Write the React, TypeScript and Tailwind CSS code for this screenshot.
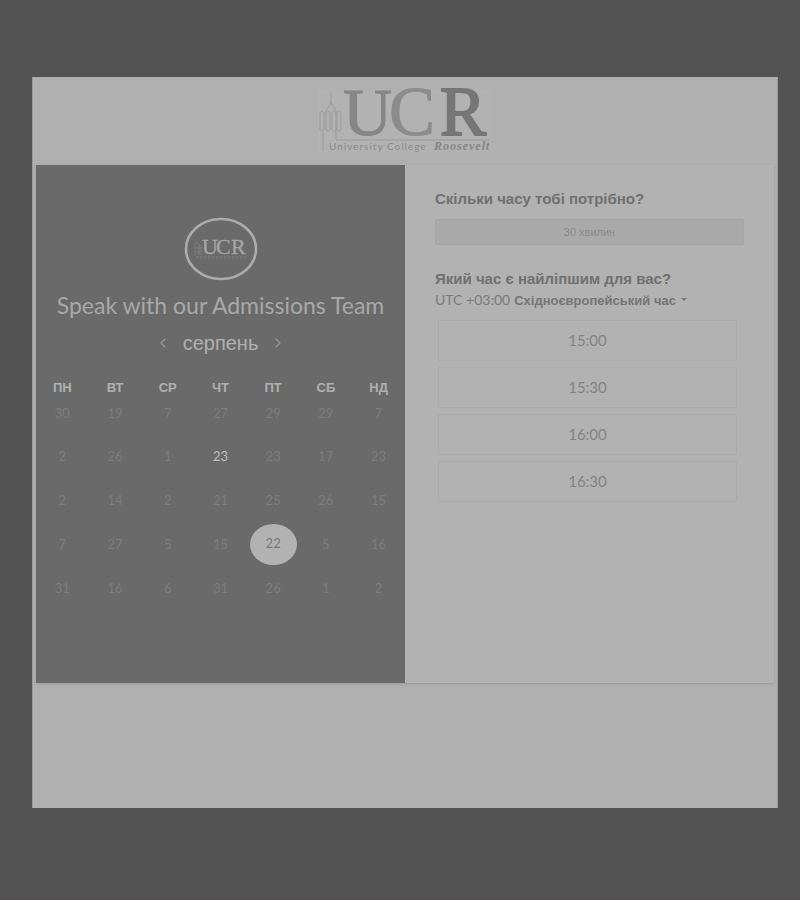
import { useState } from "react";
import { ChevronLeft, ChevronRight } from "lucide-react";

const weekdays = ["ПН", "ВТ", "СР", "ЧТ", "ПТ", "СБ", "НД"];

const weeks = [
  [30, 19, 7, 27, 29, 29, 7],
  [2, 26, 1, 23, 23, 17, 23],
  [2, 14, 2, 21, 25, 26, 15],
  [7, 27, 5, 15, 22, 5, 16],
  [31, 16, 6, 31, 26, 1, 2],
];

const slots = ["15:00", "15:30", "16:00", "16:30"];

const latin = "font-['Lato','Liberation_Sans',sans-serif]";
const sans = "font-['Liberation_Sans',sans-serif]";

function Logo() {
  return (
    <svg className="overflow-visible" width="174" height="68" viewBox="0 0 174 68" role="img" aria-label="University College Roosevelt">
      <rect x="0" y="2" width="174" height="63" fill="#b2b2b2" />
      <g fill="none" stroke="#9b9b9b" strokeWidth="1">
        <path d="M13 5v8M13 13l-1 4-4 5v5M13 13l1 4 4 5v5M18 38v14h154M5 45v18" />
        <path d="M2 25q2-4 4 0v17q-2 3-4 0zM8 25q2-4 4 0v17q-2 3-4 0zM14 25q2-4 4 0v17q-2 3-4 0zM19 25q2-4 4 0v17q-2 3-4 0z" />
      </g>
      <g fontFamily="Liberation Serif, serif">
        <text x="25" y="47" fontSize="68" fill="#868686" stroke="#868686">U</text>
        <text x="71" y="47" fontSize="69" fill="#8c8c8c" stroke="#8c8c8c">C</text>
        <text x="122" y="47" fontSize="69" fill="#767676" stroke="#767676" strokeWidth="2">R</text>
      </g>
      <text x="11" y="62" fill="#8b8b8b" fontFamily="Lato, sans-serif" fontSize="10" letterSpacing="1">
        University College
      </text>
      <text x="116" y="62" fill="#858585" fontFamily="Liberation Serif, serif" fontSize="12" fontWeight="bold" fontStyle="italic" letterSpacing="1">
        Roosevelt
      </text>
    </svg>
  );
}

function Avatar() {
  return (
    <svg width="74" height="64" viewBox="0 0 74 64" role="img" aria-label="UCR">
      <ellipse cx="37" cy="32" rx="35" ry="30" fill="none" stroke="#acacac" strokeWidth="2.5" />
      <path d="M11 38V28l2-3 2 3v10M15 38V28l1-1 1 1v10M11 31h6M11 35h6" fill="none" stroke="#7c7c7c" />
      <g fontFamily="Liberation Serif, serif" fontSize="22" fill="#a6a6a6" stroke="#a6a6a6" strokeWidth="0.3">
        <text x="18" y="37">U</text>
        <text x="32" y="37">C</text>
        <text x="47" y="37">R</text>
      </g>
      <path d="M12 40h51" stroke="#7c7c7c" strokeDasharray="3 1" />
    </svg>
  );
}

function Calendar({ selected, onSelect }: { selected: string; onSelect: (key: string) => void }) {
  return (
    <table className={`w-full table-fixed text-center ${latin}`}>
      <thead>
        <tr className={`h-6 text-[13px] font-bold text-[#b0b0b0] ${sans}`}>
          {weekdays.map((day) => (
            <th key={day} scope="col">{day}</th>
          ))}
        </tr>
      </thead>
      <tbody>
        {weeks.map((week, row) => (
          <tr key={row} className={row === 0 ? "h-[34px] align-top" : "h-11 align-middle"}>
            {week.map((day, col) => {
              const key = `${row}-${col}`;
              const today = key === "1-3";
              const active = key === selected;
              return (
                <td key={col} className="p-0">
                  <button
                    type="button"
                    disabled={!today && !active}
                    onClick={() => onSelect(key)}
                    className={
                      active
                        ? "h-[41px] w-[47px] rounded-[50%] bg-[#b2b2b2] align-middle text-[13px] text-[#787878]"
                        : today
                          ? "h-6 align-middle text-[13px] text-[#bebebe]"
                          : "h-6 align-middle text-[13px] text-[#7d7d7d]"
                    }
                  >
                    {day}
                  </button>
                </td>
              );
            })}
          </tr>
        ))}
      </tbody>
    </table>
  );
}

export default function App() {
  const [selected, setSelected] = useState("3-4");

  return (
    <div className={`min-h-screen border-b border-[#554c51] bg-[#535353] pt-[77px] pr-[22px] pb-[91px] pl-8 ${sans}`}>
      <main className="border-x border-[#9a9a9a] bg-[#b0b0b0] px-[3px] pb-[125px]">
        <header className="flex h-[88px] justify-center pt-[11px]">
          <Logo />
        </header>

        <div className="grid grid-cols-2 shadow-sm">
          <section className="bg-[#6a6a6a] pb-[73px]" aria-label="Календар">
            <div className="flex justify-center pt-[52px]">
              <Avatar />
            </div>
            <h1 className={`mt-2 text-center text-[23px] leading-8 whitespace-nowrap text-[#a8a8a8] ${latin}`}>
              Speak with our Admissions Team
            </h1>
            <div className="mt-1.5 flex h-8 items-center justify-center gap-3 text-[#b0b0b0]">
              <button type="button" aria-label="Попередній місяць" className="text-[#949494]">
                <ChevronLeft size={16} strokeWidth={2} />
              </button>
              <h2 className="text-[20px] font-normal">серпень</h2>
              <button type="button" aria-label="Наступний місяць" className="text-[#949494]">
                <ChevronRight size={16} strokeWidth={2} />
              </button>
            </div>
            <div className="mt-[17px]">
              <Calendar selected={selected} onSelect={setSelected} />
            </div>
          </section>

          <section className="bg-[#b2b2b2] px-[30px] pt-6 text-[#707070]">
            <h2 className="text-[15px] leading-5 font-bold">Скільки часу тобі потрібно?</h2>
            <button
              type="button"
              className="mt-2.5 h-[26px] w-full rounded-xs border border-[#a4a4a4] bg-[#a9a9a9] text-[11px] text-[#8a8a8a]"
            >
              30 хвилин
            </button>
            <h2 className="mt-6 text-[15px] leading-5 font-bold">Який час є найліпшим для вас?</h2>
            <div className="flex h-[22px] items-baseline gap-1 text-[#7a7a7a]">
              <label htmlFor="zone" className={`text-[14px] ${latin}`}>UTC +03:00</label>
              <select
                id="zone"
                className="field-sizing-content appearance-none bg-transparent text-[13px] font-bold text-[#757575] outline-none"
              >
                <option>Східноєвропейський час</option>
              </select>
              <svg className="self-center" width="8" height="4" viewBox="0 0 8 4" aria-hidden="true">
                <path d="M1 0h6L4 3z" fill="#777777" />
              </svg>
            </div>
            <div className="mt-[9px] mr-[7px] ml-[3px] flex flex-col gap-1.5">
              {slots.map((time) => (
                <button
                  key={time}
                  type="button"
                  className={`h-[41px] rounded-xs border border-[#aaaaaa] text-[15px] text-[#838383] ${latin}`}
                >
                  {time}
                </button>
              ))}
            </div>
          </section>
        </div>
      </main>
    </div>
  );
}
